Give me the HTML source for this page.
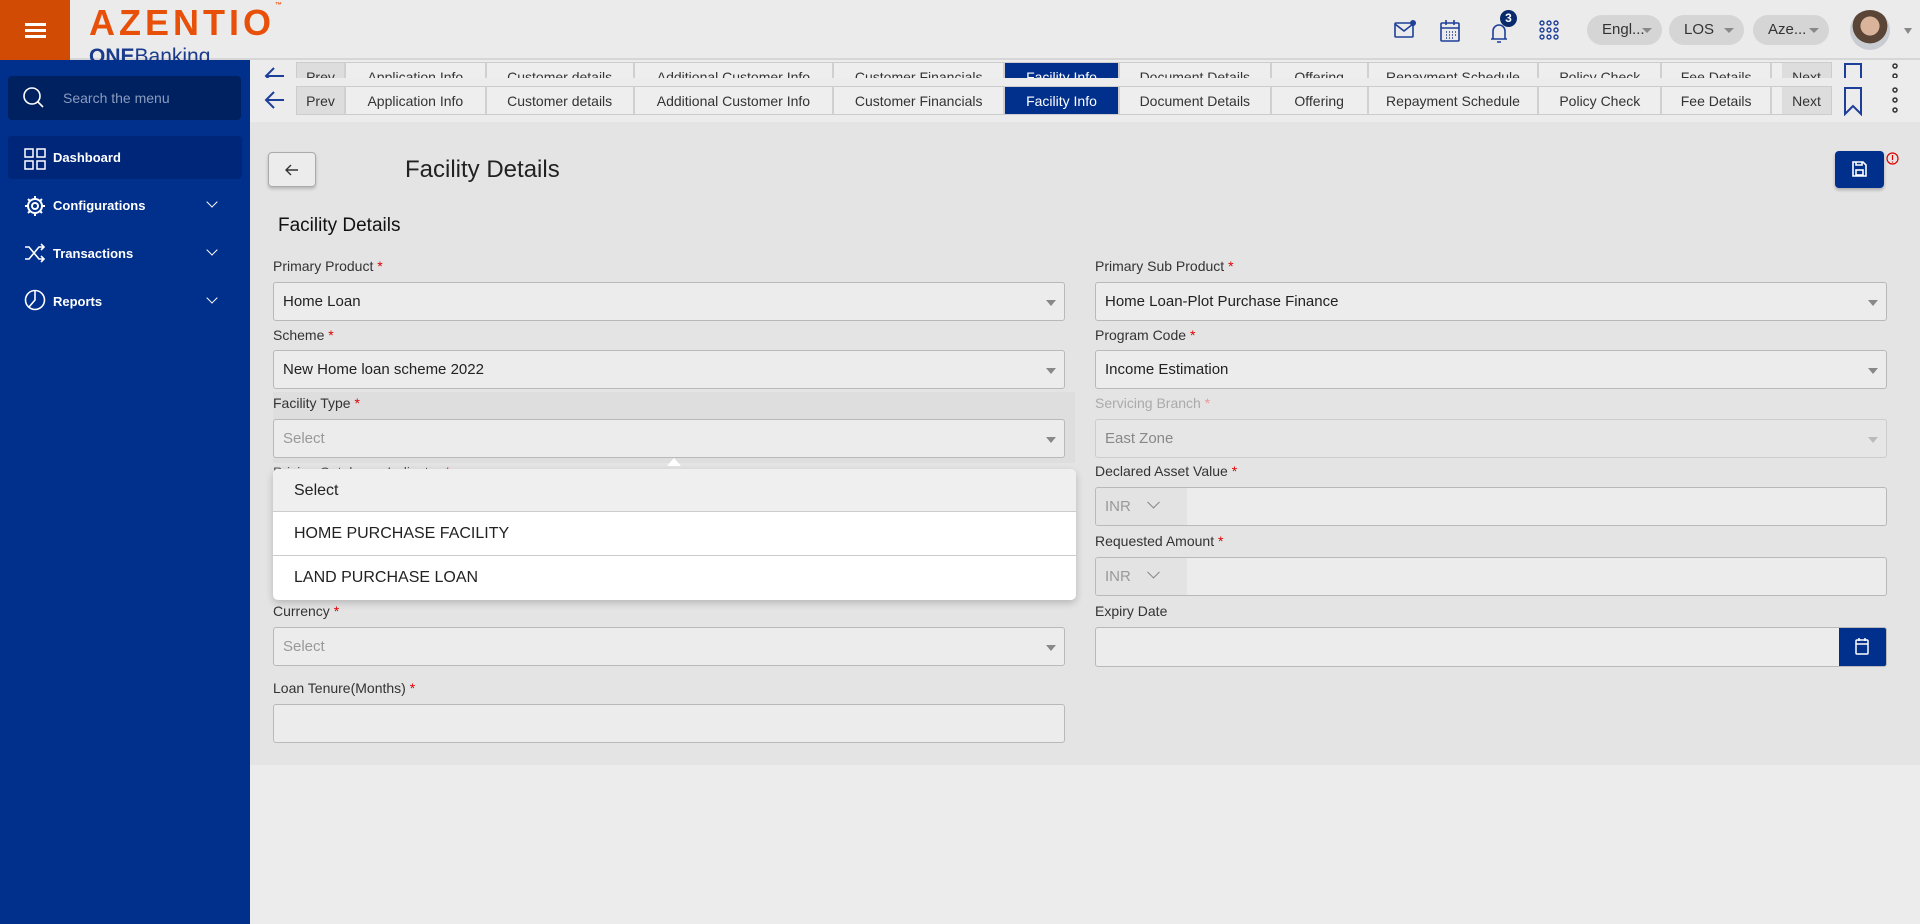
<!DOCTYPE html>
<html><head><meta charset="utf-8">
<style>
*{box-sizing:border-box;margin:0;padding:0}
body{width:1920px;height:924px;overflow:hidden;background:#ececec;font-family:"Liberation Sans",sans-serif;color:#222;position:relative}
.abs{position:absolute}
.hdr{left:0;top:0;width:1920px;height:60px;background:#ebebeb;border-bottom:2px solid #d6d6d6}
.burger{left:0;top:0;width:70px;height:60px;background:#d24b05}
.burger i{position:absolute;left:25px;width:21px;height:3px;background:#fff}
.side{left:0;top:60px;width:250px;height:864px;background:#002f8c}
.mi{position:absolute;left:24px;color:#fff;font-size:13px;font-weight:bold}
.chev{position:absolute;left:208px;width:8px;height:8px;border-right:1.5px solid #fff;border-bottom:1.5px solid #fff;transform:rotate(45deg)}
.tabs{position:absolute;height:29px;display:flex;border:1px solid #ccc;background:#eee;font-size:14px;color:#333}
.tabs div{border-right:2px solid #d0d0d0;display:flex;align-items:center;justify-content:center;height:100%}
.lbl{position:absolute;font-size:14px;color:#333}
.lbl b{color:#d00;font-weight:normal}
.inp{position:absolute;height:39px;border:1px solid #b9b9b9;border-radius:3px;background:#ececec;font-size:15px;padding-left:9px;display:flex;align-items:center;color:#222}
.inp.ph{color:#999}
.inp .ar{position:absolute;right:8px;top:17px;border-left:5px solid transparent;border-right:5px solid transparent;border-top:6px solid #888}
.pill{position:absolute;top:15px;height:30px;border-radius:15px;background:#d5d5d5;font-size:15px;color:#333;padding-left:15px;line-height:30px}
.pill:after{content:"";position:absolute;right:10px;top:13px;border-left:5px solid transparent;border-right:5px solid transparent;border-top:5px solid #888}
</style></head><body>
<div class="abs hdr"></div>
<div class="abs burger"><i style="top:23px"></i><i style="top:29px"></i><i style="top:35px"></i></div>
<div class="abs" style="left:89px;top:2px;font-size:36px;font-weight:bold;color:#e8500a;letter-spacing:4px">AZENTIO<span style="font-size:7px;vertical-align:top;letter-spacing:0">™</span></div>
<div class="abs" style="left:89px;top:44px;height:16px;overflow:hidden;font-size:21px;color:#1a3a8c;line-height:26px"><b>ONE</b>Banking</div>
<svg class="abs" style="left:1393px;top:18px" width="24" height="24" viewBox="0 0 24 24" fill="none" stroke="#1e3f99" stroke-width="1.6"><rect x="2" y="5" width="18" height="14" rx="1"/><path d="M2 6l9 7 9-7"/><circle cx="20" cy="5" r="3" fill="#1e3f99" stroke="none"/></svg>
<svg class="abs" style="left:1438px;top:18px" width="24" height="26" viewBox="0 0 24 26" fill="none" stroke="#1e3f99" stroke-width="1.6"><rect x="3" y="5" width="18" height="18" rx="1"/><path d="M3 10h18M8 2v5M16 2v5"/><path d="M8 14h1M11 14h1M14 14h1M17 14h1M8 17h1M11 17h1M14 17h1M17 17h1M8 20h1M11 20h1M14 20h1" stroke-width="1.5"/></svg>
<svg class="abs" style="left:1485px;top:16px" width="30" height="30" viewBox="0 0 30 30" fill="none" stroke="#1e3f99" stroke-width="1.6"><path d="M6 23h16M8 23v-8a6 6 0 0 1 12 0v8M12 26h4"/></svg>
<div class="abs" style="left:1500px;top:10px;width:17px;height:17px;border-radius:50%;background:#0a2a6e;color:#fff;font-size:12px;font-weight:bold;text-align:center;line-height:17px">3</div>
<svg class="abs" style="left:1539px;top:20px" width="20" height="20" viewBox="0 0 20 20" fill="none" stroke="#1e3f99" stroke-width="1.4"><circle cx="3" cy="3" r="2"/><circle cx="10" cy="3" r="2"/><circle cx="17" cy="3" r="2"/><circle cx="3" cy="10" r="2"/><circle cx="10" cy="10" r="2"/><circle cx="17" cy="10" r="2"/><circle cx="3" cy="17" r="2"/><circle cx="10" cy="17" r="2"/><circle cx="17" cy="17" r="2"/></svg>
<div class="pill" style="left:1587px;width:75px">Engl...</div>
<div class="pill" style="left:1669px;width:75px">LOS</div>
<div class="pill" style="left:1753px;width:76px">Aze...</div>
<div class="abs" style="left:1850px;top:10px;width:40px;height:40px;border-radius:50%;background:radial-gradient(circle at 50% 40%,#d9b49a 0 30%,#5a4536 31% 55%,#c9ccd2 56%)"></div>
<div class="abs" style="left:1904px;top:28px;border-left:4px solid transparent;border-right:4px solid transparent;border-top:6px solid #888"></div>
<div class="abs side">
 <div class="abs" style="left:8px;top:16px;width:233px;height:44px;background:#00215f;border-radius:4px"></div>
 <svg class="abs" style="left:22px;top:26px" width="24" height="24" viewBox="0 0 24 24" fill="none" stroke="#fff" stroke-width="1.6"><circle cx="10" cy="10" r="8"/><path d="M16 16l5 5"/></svg>
 <div class="abs" style="left:63px;top:30px;color:#8a9bc0;font-size:14px">Search the menu</div>
 <div class="abs" style="left:8px;top:76px;width:234px;height:43px;background:#00267a;border-radius:4px"></div>
 <svg class="abs" style="left:24px;top:88px" width="22" height="22" viewBox="0 0 22 22" fill="none" stroke="#fff" stroke-width="1.5"><rect x="1" y="1" width="8" height="8"/><rect x="13" y="1" width="8" height="8"/><rect x="1" y="13" width="8" height="8"/><rect x="13" y="13" width="8" height="8"/></svg>
 <div class="mi" style="left:53px;top:90px">Dashboard</div>
 <svg class="abs" style="left:24px;top:135px" width="22" height="22" viewBox="0 0 22 22" fill="none" stroke="#fff" stroke-width="2"><circle cx="11" cy="11" r="7"/><circle cx="11" cy="11" r="3"/><path d="M11 1v3M11 18v3M1 11h3M18 11h3M4 4l2 2M16 16l2 2M4 18l2-2M16 6l2-2"/></svg>
 <div class="mi" style="left:53px;top:138px">Configurations</div><div class="chev" style="top:138px"></div>
 <svg class="abs" style="left:24px;top:183px" width="22" height="20" viewBox="0 0 22 20" fill="none" stroke="#fff" stroke-width="1.6"><path d="M1 4h4l10 12h5M1 16h4l10-12h5M17 1l3 3-3 3M17 13l3 3-3 3"/></svg>
 <div class="mi" style="left:53px;top:186px">Transactions</div><div class="chev" style="top:186px"></div>
 <svg class="abs" style="left:24px;top:228px" width="22" height="24" viewBox="0 0 22 24" fill="none" stroke="#fff" stroke-width="1.6"><circle cx="11" cy="12" r="9.5"/><path d="M11 2.5V12l-6 7"/></svg>
 <div class="mi" style="left:53px;top:234px">Reports</div><div class="chev" style="top:234px"></div>
</div>
<div class="abs" style="left:250px;top:62px;width:1670px;height:16px;overflow:hidden">
 <svg class="abs" style="left:13px;top:2px" width="24" height="24" viewBox="0 0 24 24" fill="none" stroke="#1e3f99" stroke-width="2"><path d="M21 12H4M11 4l-8 8 8 8"/></svg>
 <div class="tabs" style="left:46px;top:0px;width:1536px">
  <div style="width:49px;background:#ddd">Prev</div><div style="width:141px">Application Info</div><div style="width:148px">Customer details</div><div style="width:200px">Additional Customer Info</div><div style="width:171px">Customer Financials</div><div style="width:115px;background:#002f8c;color:#fff">Facility Info</div><div style="width:152px">Document Details</div><div style="width:97px">Offering</div><div style="width:171px">Repayment Schedule</div><div style="width:123px">Policy Check</div><div style="width:110px">Fee Details</div><div style="width:49px;background:#ddd;border:0;margin-left:10px">Next</div>
 </div>
 <svg class="abs" style="left:1593px;top:0px" width="20" height="30" viewBox="0 0 20 30" fill="none" stroke="#1e3f99" stroke-width="2"><path d="M2 2h16v26l-8-8-8 8z"/></svg>
 <svg class="abs" style="left:1641px;top:0px" width="8" height="28" viewBox="0 0 8 28" fill="none" stroke="#333" stroke-width="1.5"><circle cx="4" cy="4" r="2"/><circle cx="4" cy="14" r="2"/></svg>
</div>
<svg class="abs" style="left:263px;top:88px" width="24" height="24" viewBox="0 0 24 24" fill="none" stroke="#1e3f99" stroke-width="2"><path d="M21 12H4M11 4l-8 8 8 8"/></svg>
<div class="tabs" style="left:296px;top:86px;width:1536px">
 <div style="width:49px;background:#ddd">Prev</div><div style="width:141px">Application Info</div><div style="width:148px">Customer details</div><div style="width:200px">Additional Customer Info</div><div style="width:171px">Customer Financials</div><div style="width:115px;background:#002f8c;color:#fff">Facility Info</div><div style="width:152px">Document Details</div><div style="width:97px">Offering</div><div style="width:171px">Repayment Schedule</div><div style="width:123px">Policy Check</div><div style="width:110px">Fee Details</div><div style="width:49px;background:#ddd;border:0;margin-left:10px">Next</div>
</div>
<svg class="abs" style="left:1843px;top:86px" width="20" height="30" viewBox="0 0 20 30" fill="none" stroke="#1e3f99" stroke-width="2"><path d="M2 2h16v26l-8-8-8 8z"/></svg>
<svg class="abs" style="left:1891px;top:86px" width="8" height="28" viewBox="0 0 8 28" fill="none" stroke="#333" stroke-width="1.5"><circle cx="4" cy="4" r="2"/><circle cx="4" cy="14" r="2"/><circle cx="4" cy="24" r="2"/></svg>
<div class="abs" style="left:250px;top:122px;width:1670px;height:643px;background:#e4e4e4"></div>
<div class="abs" style="left:268px;top:152px;width:48px;height:35px;border:1px solid #aaa;border-radius:4px;background:#ececec;box-shadow:0 2px 3px rgba(0,0,0,.2)"></div>
<svg class="abs" style="left:284px;top:162px" width="16" height="16" viewBox="0 0 16 16" fill="none" stroke="#333" stroke-width="1.4"><path d="M14 8H2M7 3L2 8l5 5"/></svg>
<div class="abs" style="left:405px;top:156px;font-size:24px;color:#222">Facility Details</div>
<div class="abs" style="left:1835px;top:151px;width:49px;height:37px;background:#002f8c;border-radius:4px;box-shadow:0 2px 3px rgba(0,0,0,.25)"></div>
<svg class="abs" style="left:1852px;top:161px" width="15" height="16" viewBox="0 0 15 16" fill="none" stroke="#fff" stroke-width="1.6"><path d="M1 1h10l3 3v11H1z"/><rect x="4" y="9" width="7" height="5"/><path d="M4 1v3h6V1"/></svg>
<svg class="abs" style="left:1886px;top:152px" width="13" height="13" viewBox="0 0 13 13" fill="none" stroke="#d00" stroke-width="1.2"><circle cx="6.5" cy="6.5" r="5.5"/><path d="M6.5 3v5M6.5 9.5v1"/></svg>
<div class="abs" style="left:278px;top:215px;font-size:19px;color:#111">Facility Details</div>
<div class="abs" style="left:273px;top:392px;width:802px;height:71px;background:#dedede"></div>
<div class="lbl" style="left:273px;top:258px">Primary Product <b>*</b></div>
<div class="inp" style="left:273px;top:282px;width:792px">Home Loan<span class="ar"></span></div>
<div class="lbl" style="left:273px;top:327px">Scheme <b>*</b></div>
<div class="inp" style="left:273px;top:350px;width:792px">New Home loan scheme 2022<span class="ar"></span></div>
<div class="lbl" style="left:273px;top:395px">Facility Type <b>*</b></div>
<div class="inp ph" style="left:273px;top:419px;width:792px">Select<span class="ar"></span></div>
<div class="lbl" style="left:273px;top:464px;color:#555">Pricing Catalogue Indicator <b>*</b></div>
<div class="lbl" style="left:273px;top:603px">Currency <b>*</b></div>
<div class="inp ph" style="left:273px;top:627px;width:792px">Select<span class="ar"></span></div>
<div class="lbl" style="left:273px;top:680px">Loan Tenure(Months) <b>*</b></div>
<div class="inp" style="left:273px;top:704px;width:792px"></div>
<div class="lbl" style="left:1095px;top:258px">Primary Sub Product <b>*</b></div>
<div class="inp" style="left:1095px;top:282px;width:792px">Home Loan-Plot Purchase Finance<span class="ar"></span></div>
<div class="lbl" style="left:1095px;top:327px">Program Code <b>*</b></div>
<div class="inp" style="left:1095px;top:350px;width:792px">Income Estimation<span class="ar"></span></div>
<div class="lbl" style="left:1095px;top:395px;color:#aaa">Servicing Branch <b style="color:#e99">*</b></div>
<div class="inp" style="left:1095px;top:419px;width:792px;background:#e6e6e6;border-color:#ccc;color:#888">East Zone<span class="ar" style="border-top-color:#bbb"></span></div>
<div class="lbl" style="left:1095px;top:463px">Declared Asset Value <b>*</b></div>
<div class="inp" style="left:1095px;top:487px;width:792px;padding:0;overflow:hidden"><div style="width:91px;height:100%;background:#e3e3e3;color:#999;padding-left:9px;line-height:37px">INR <span style="margin-left:14px;display:inline-block;width:9px;height:9px;border-right:1.5px solid #888;border-bottom:1.5px solid #888;transform:rotate(45deg) translate(-3px,-3px)"></span></div></div>
<div class="lbl" style="left:1095px;top:533px">Requested Amount <b>*</b></div>
<div class="inp" style="left:1095px;top:557px;width:792px;padding:0;overflow:hidden"><div style="width:91px;height:100%;background:#e3e3e3;color:#999;padding-left:9px;line-height:37px">INR <span style="margin-left:14px;display:inline-block;width:9px;height:9px;border-right:1.5px solid #888;border-bottom:1.5px solid #888;transform:rotate(45deg) translate(-3px,-3px)"></span></div></div>
<div class="lbl" style="left:1095px;top:603px">Expiry Date</div>
<div class="inp" style="left:1095px;top:627px;width:792px;height:40px;overflow:hidden;padding:0"><div style="position:absolute;right:0;top:0;width:47px;height:100%;background:#002f8c"></div></div>
<svg class="abs" style="left:1855px;top:637px" width="14" height="18" viewBox="0 0 14 18" fill="none" stroke="#fff" stroke-width="1.5"><rect x="1" y="3" width="12" height="14" rx="1"/><path d="M1 7h12M4 1v3M10 1v3"/></svg>
<div class="abs" style="left:667px;top:458px;border-left:7px solid transparent;border-right:7px solid transparent;border-bottom:8px solid #fff"></div>
<div class="abs" style="left:273px;top:469px;width:803px;height:131px;background:#fff;border-radius:5px;box-shadow:0 3px 8px rgba(0,0,0,.2);overflow:hidden;font-size:16px;color:#222">
 <div style="height:43px;background:#efefef;padding-left:21px;line-height:43px;border-bottom:1px solid #ccc">Select</div>
 <div style="height:44px;padding-left:21px;line-height:44px;border-bottom:1px solid #ccc">HOME PURCHASE FACILITY</div>
 <div style="height:44px;padding-left:21px;line-height:44px">LAND PURCHASE LOAN</div>
</div>
</body></html>
